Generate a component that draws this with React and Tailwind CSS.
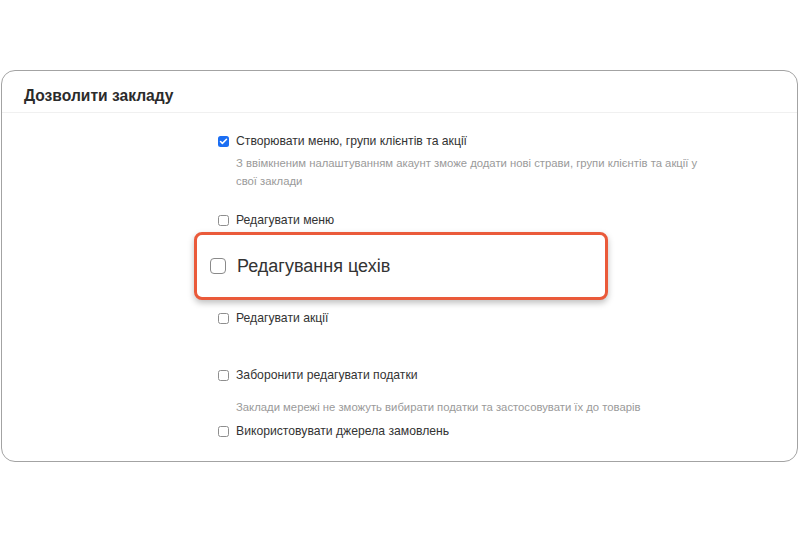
import { Check } from 'lucide-react'

function Box({ checked, big }) {
  if (big) {
    return (
      <span className="inline-block w-[16px] h-[16px] rounded-[4px] border-[1.5px] border-[#8a8a8a] bg-white shrink-0" />
    )
  }
  if (checked) {
    return (
      <span className="inline-flex items-center justify-center w-[11px] h-[11px] rounded-[2.5px] bg-[#1b6ef3] shrink-0">
        <Check size={9} strokeWidth={4} className="text-white" />
      </span>
    )
  }
  return <span className="inline-block w-[11px] h-[11px] rounded-[2.5px] border border-[#8e8e8e] bg-white shrink-0" />
}

function Row({ label, checked }) {
  return (
    <label className="flex items-center gap-[7px] text-[12.2px] leading-[18px] text-[#333]">
      <Box checked={checked} />
      <span>{label}</span>
    </label>
  )
}

function Hint({ children }) {
  return <p className="pl-[18px] w-[480px] text-[11.3px] leading-[18px] text-[#9a9a9a]">{children}</p>
}

export default function App() {
  return (
    <div className="w-[800px] h-[533px] bg-white overflow-hidden" style={{ fontFamily: '"Liberation Sans", Arial, sans-serif' }}>
      <div className="mt-[70px] ml-[1px] w-[797px] border border-[#a3a3a3] rounded-[14px]">
        <div className="px-[22px] pt-[15px] pb-[6px] border-b border-[#f0f0f0]">
          <h2 className="text-[15.6px] leading-[20px] font-bold text-[#2b2b2b]">Дозволити закладу</h2>
        </div>
        <div className="pl-[216px] pt-[19px] pb-[21px] flex flex-col">
          <Row label="Створювати меню, групи клієнтів та акції" checked />
          <div className="mt-[4px]">
            <Hint>З ввімкненим налаштуванням акаунт зможе додати нові страви, групи клієнтів та акції у свої заклади</Hint>
          </div>
          <div className="mt-[21px]">
            <Row label="Редагувати меню" />
          </div>
          <div className="mt-[3px] -ml-[24px] w-[414px] h-[68px] border-[3px] border-[#ea5a3a] rounded-[8px] bg-white shadow-[0_3px_6px_rgba(0,0,0,0.25)] flex items-center pl-[13px] gap-[11px]">
            <Box big />
            <span className="text-[18px] leading-[22px] text-[#333]">Редагування цехів</span>
          </div>
          <div className="mt-[9px]">
            <Row label="Редагувати акції" />
          </div>
          <div className="mt-[39px]">
            <Row label="Заборонити редагувати податки" />
          </div>
          <div className="mt-[14px]">
            <Hint>Заклади мережі не зможуть вибирати податки та застосовувати їх до товарів</Hint>
          </div>
          <div className="mt-[6px]">
            <Row label="Використовувати джерела замовлень" />
          </div>
        </div>
      </div>
    </div>
  )
}
